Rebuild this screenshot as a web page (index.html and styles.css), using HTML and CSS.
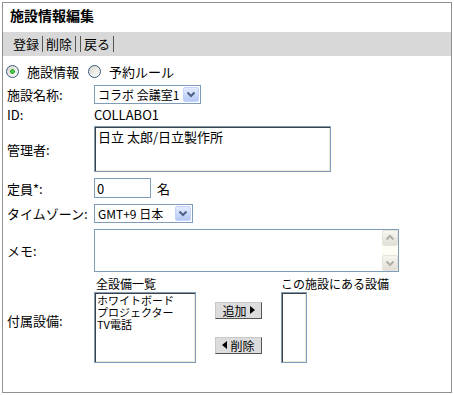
FILE: index.html
```html
<!DOCTYPE html>
<html lang="ja">

<head>
    <meta charset="UTF-8" />
    <title>施設情報編集</title>
    <link rel="stylesheet" href="styles.css">
</head>

<body>
    <div class="panel">
        <h1 class="panel-title">施設情報編集</h1>

        <div class="toolbar">
            <a href="#">登録</a><a href="#">削除</a><a href="#" class="spacer"></a><a href="#">戻る</a>
        </div>

        <div class="tabs">
            <label class="radio"><input type="radio" name="tab" checked>施設情報</label>
            <label class="radio"><input type="radio" name="tab">予約ルール</label>
        </div>

        <table class="form">
            <tr>
                <th>施設名称:</th>
                <td>
                    <div class="select select-name">
                        <span class="select-value">コラボ 会議室1</span>
                        <span class="select-btn">
                            <svg width="16" height="15" viewBox="0 0 16 15"><polyline points="4.5,5.5 8,9 11.5,5.5" fill="none" stroke="#4d6185" stroke-width="2" /></svg>
                        </span>
                    </div>
                </td>
            </tr>
            <tr class="id-row">
                <th>ID:</th>
                <td>COLLABO1</td>
            </tr>
            <tr>
                <th>管理者:</th>
                <td><textarea class="manager">日立 太郎/日立製作所</textarea></td>
            </tr>
            <tr>
                <th>定員*:</th>
                <td>
                    <div class="capacity">
                        <input type="text" value="0">
                        <span>名</span>
                    </div>
                </td>
            </tr>
            <tr>
                <th>タイムゾーン:</th>
                <td>
                    <div class="select select-tz">
                        <span class="select-value">GMT+9 日本</span>
                        <span class="select-btn">
                            <svg width="16" height="15" viewBox="0 0 16 15"><polyline points="4.5,5.5 8,9 11.5,5.5" fill="none" stroke="#4d6185" stroke-width="2" /></svg>
                        </span>
                    </div>
                </td>
            </tr>
            <tr>
                <th>メモ:</th>
                <td>
                    <div class="memo">
                        <textarea></textarea>
                        <div class="scrollbar">
                            <span class="scroll-btn">
                                <svg width="14" height="14" viewBox="0 0 14 14"><polyline points="3.5,8.5 7,5 10.5,8.5" fill="none" stroke="#b0b0a6" stroke-width="2" /></svg>
                            </span>
                            <span class="scroll-btn">
                                <svg width="14" height="14" viewBox="0 0 14 14"><polyline points="3.5,5.5 7,9 10.5,5.5" fill="none" stroke="#b0b0a6" stroke-width="2" /></svg>
                            </span>
                        </div>
                    </div>
                </td>
            </tr>
            <tr class="equip-row">
                <th>付属設備:</th>
                <td>
                    <div class="equip">
                        <div class="equip-label all-label">全設備一覧</div>
                        <div></div>
                        <div class="equip-label">この施設にある設備</div>

                        <ul class="listbox all-list">
                            <li>ホワイトボード</li>
                            <li>プロジェクター</li>
                            <li>TV電話</li>
                        </ul>
                        <div class="move-btns">
                            <button class="move-btn">追加<svg width="5" height="8" viewBox="0 0 5 8"><polygon points="0,0 5,4 0,8" fill="#000" /></svg></button>
                            <button class="move-btn"><svg width="5" height="8" viewBox="0 0 5 8"><polygon points="5,0 0,4 5,8" fill="#000" /></svg>削除</button>
                        </div>
                        <ul class="listbox own-list"></ul>
                    </div>
                </td>
            </tr>
        </table>
    </div>
</body>

</html>
```

FILE: styles.css
```css
* {
    box-sizing: border-box;
}

body {
    margin: 2px;
    background: #fff;
    color: #000;
    font-family: "Noto Sans CJK JP", sans-serif;
    font-size: 13px;
}

input,
textarea,
button {
    font-family: inherit;
    color: #000;
}

.panel {
    width: 450px;
    height: 391px;
    border: 1px solid #909090;
}

.panel-title {
    margin: 0;
    padding: 2px 7px 7px;
    font-size: 14px;
    font-weight: bold;
    line-height: 20px;
}

/* toolbar */
.toolbar {
    display: flex;
    align-items: center;
    height: 24px;
    padding-left: 7px;
    background: #d8d8d8;
}

.toolbar a {
    padding: 0 3px;
    line-height: 16px;
    border-right: 1px solid #555;
    color: #000;
    text-decoration: none;
}

.toolbar a.spacer {
    padding: 0 2px;
    height: 16px;
}

/* radio tabs */
.tabs {
    display: flex;
    align-items: center;
    height: 26px;
    padding: 4px 0 0 3px;
}

.radio {
    display: flex;
    align-items: center;
    gap: 8px;
    line-height: 15px;
}

.radio + .radio {
    margin-left: 9px;
}

.radio input {
    appearance: none;
    margin: 0;
    width: 13px;
    height: 13px;
    border-radius: 50%;
    border: 1px solid #3b5a7c;
    background: linear-gradient(135deg, #d6d5cc, #fff);
}

.radio input:checked {
    background: radial-gradient(circle, #6ee06e 0, #21a121 2px, transparent 2.6px),
        linear-gradient(135deg, #d6d5cc, #fff);
}

/* form table */
.form {
    border-collapse: collapse;
    margin-left: 4px;
}

.form th {
    width: 87px;
    padding: 0;
    text-align: left;
    font-weight: normal;
    vertical-align: middle;
}

.form td {
    padding: 3px 0;
}

.form .id-row th,
.form .id-row td {
    height: 16px;
    padding: 0;
    line-height: 16px;
}

/* xp style drop-down */
.select {
    display: flex;
    align-items: center;
    height: 19px;
    padding: 1px 1px 1px 3px;
    border: 1px solid #7f9db9;
    background: #fff;
}

.select-value {
    flex: 1;
    white-space: nowrap;
    font-size: 12px;
    line-height: 15px;
}

.select-name {
    width: 107px;
}

.select-tz {
    width: 99px;
}

.select-btn {
    width: 16px;
    height: 15px;
    border: 1px solid #c3d3fd;
    border-radius: 2px;
    background: linear-gradient(#e3ebfe, #b4c9f6);
}

.select-btn svg {
    display: block;
    margin: -1px 0 0 -1px;
}

.manager {
    display: block;
    width: 237px;
    height: 46px;
    margin: 0;
    padding: 2px 3px;
    border: 1px solid #7f9db9;
    box-shadow: inset 1px 1px #404040, inset -1px -1px #ece9d8;
    font-size: 13px;
    line-height: 15px;
    resize: none;
}

.capacity {
    display: flex;
    align-items: center;
    gap: 6px;
}

.capacity input {
    width: 57px;
    height: 20px;
    margin: 0;
    padding: 0 2px;
    border: 1px solid #7f9db9;
    font-size: 13px;
}

/* memo with xp scrollbar */
.memo {
    display: flex;
    width: 305px;
    height: 43px;
    border: 1px solid #7f9db9;
}

.memo textarea {
    flex: 1;
    margin: 0;
    border: none;
    resize: none;
    overflow: hidden;
}

.scrollbar {
    display: flex;
    flex-direction: column;
    justify-content: space-between;
    width: 16px;
    background: #fdfdf6;
}

.scroll-btn {
    display: block;
    height: 16px;
    border: 1px solid #e6e4da;
    border-radius: 2px;
    background: linear-gradient(#f7f6f1, #e1dfd5);
}

.scroll-btn svg {
    display: block;
}

/* equipment lists */
.form .equip-row td {
    padding: 0 0 3px;
}

.equip {
    display: grid;
    grid-template-columns: 102px 47px auto;
    grid-template-rows: 17px 71px;
    column-gap: 19px;
}

.equip-label {
    font-size: 12px;
    line-height: 17px;
    white-space: nowrap;
}

.all-label {
    padding-left: 2px;
}

.listbox {
    margin: 0;
    padding: 1px 2px;
    list-style: none;
    border: 1px solid #7f9db9;
    box-shadow: inset 1px 1px #404040, inset -1px -1px #ece9d8;
    font-size: 11px;
    line-height: 12px;
}

.own-list {
    width: 26px;
}

.move-btns {
    display: flex;
    flex-direction: column;
    justify-content: center;
    gap: 18px;
}

.move-btn {
    display: flex;
    align-items: center;
    justify-content: center;
    gap: 3px;
    height: 17px;
    margin: 0;
    padding: 0;
    border: 1px solid;
    border-color: #c8c8c8 #555 #555 #c8c8c8;
    background: #dcdcdc;
    font-size: 12px;
    line-height: 15px;
}
```
